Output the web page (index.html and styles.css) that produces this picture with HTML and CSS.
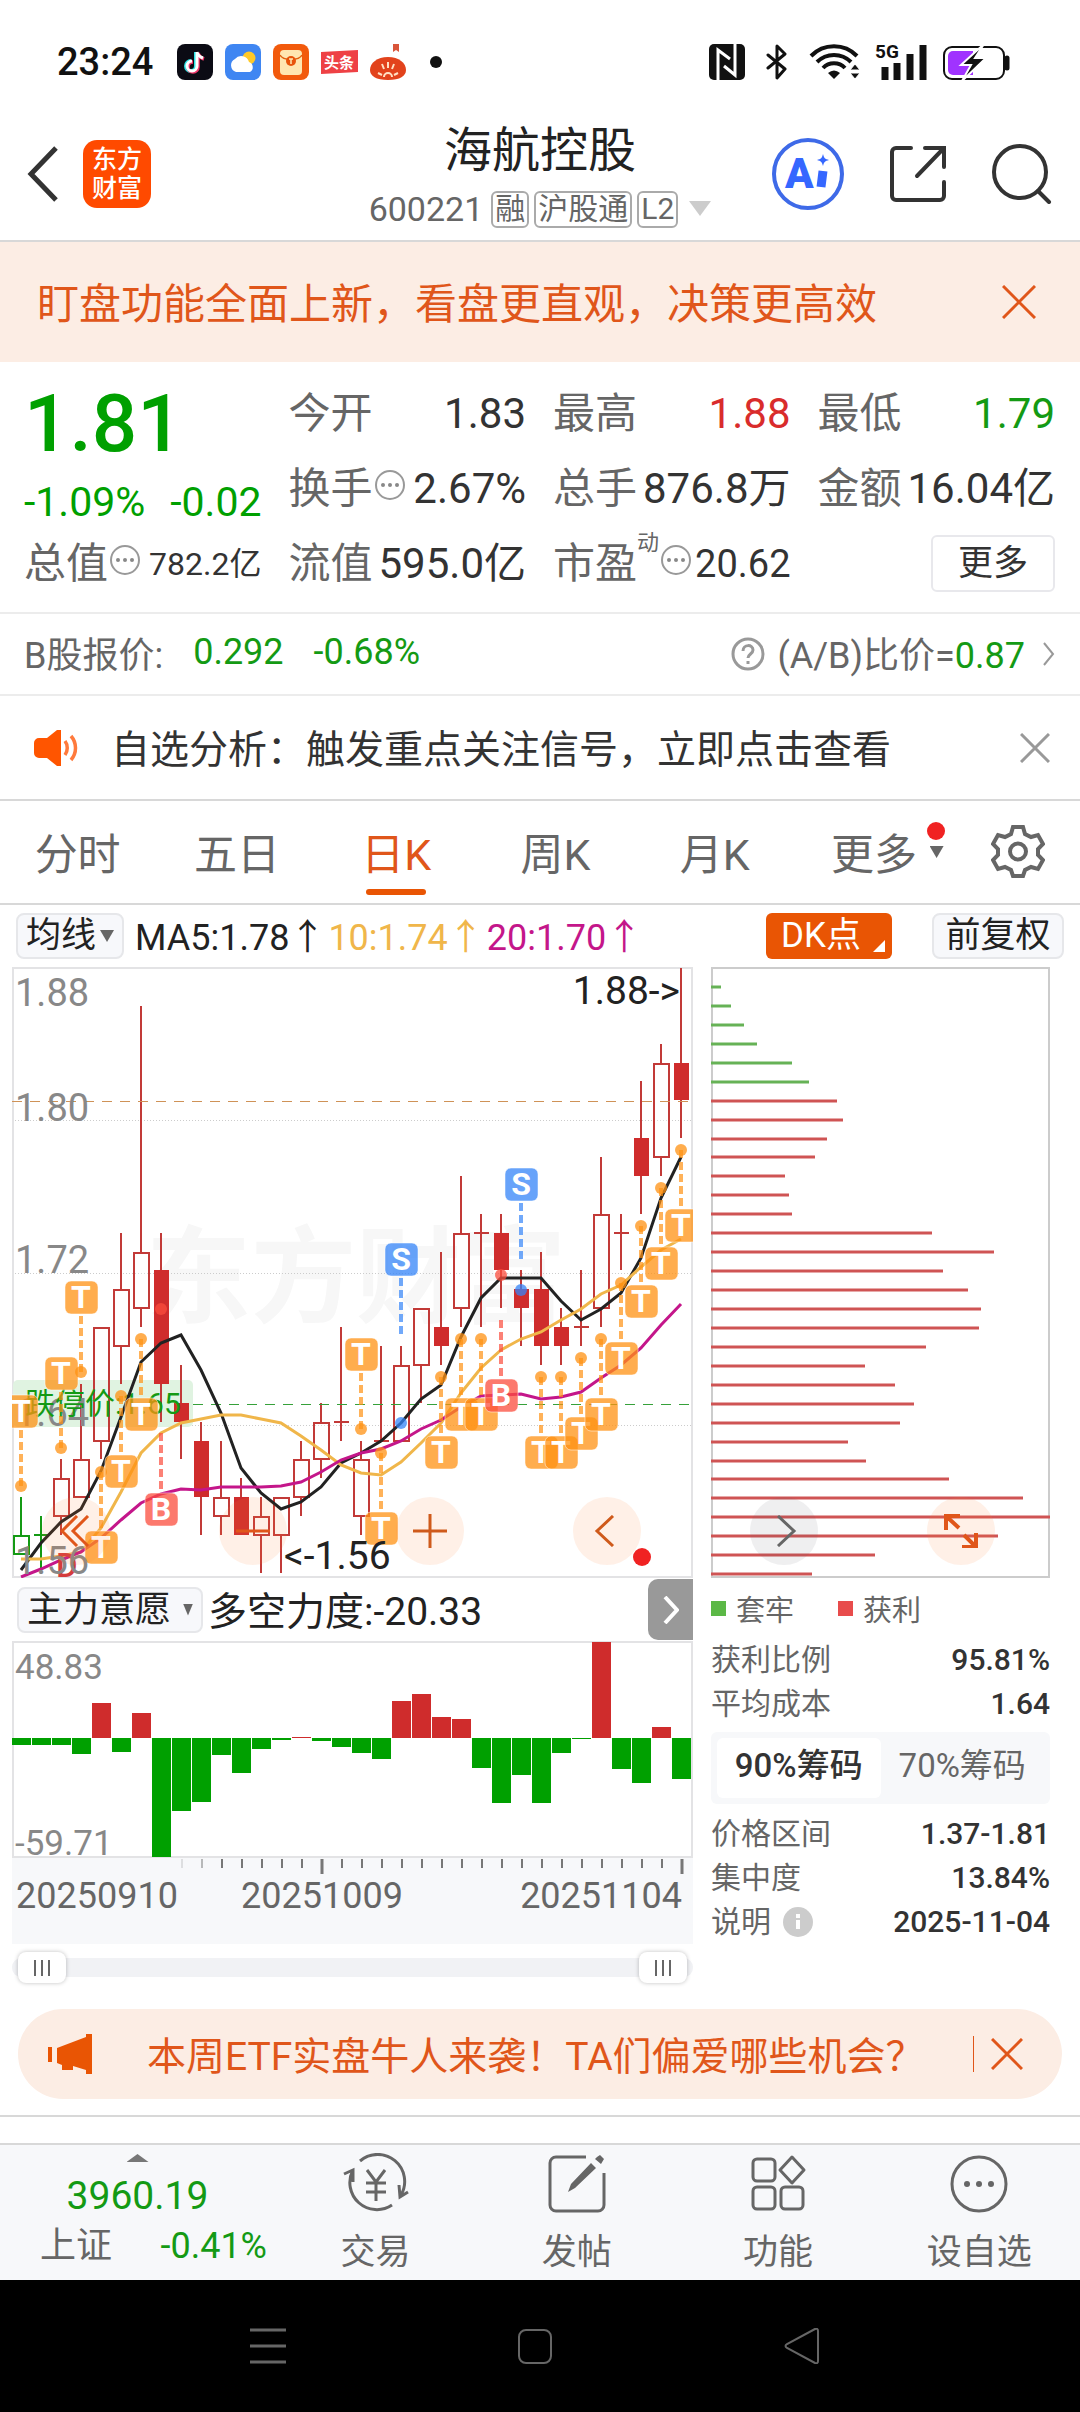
FILE: index.html
```html
<!DOCTYPE html>
<html lang="zh-CN">
<head>
<meta charset="utf-8">
<meta name="viewport" content="width=device-width, initial-scale=1">
<title>海航控股 600221</title>
<link rel="stylesheet" href="styles.css">
</head>
<body>
<div class="status">
  <div class="status-group">
    <span class="clock">23:24</span>
    <svg width="36" height="36" viewBox="0 0 36 36"><rect width="36" height="36" rx="8" fill="#0b0b14"/><path d="M19 8v14a5 5 0 1 1-5-5" fill="none" stroke="#2de2e6" stroke-width="4"/><path d="M21 9v14a5 5 0 1 1-5-5M21 9c1 4 3 5 6 6" fill="none" stroke="#f0386b" stroke-width="3.500"/><path d="M20 8v14a5 5 0 1 1-5-5M20 8c1 4 3 5 6 6" fill="none" stroke="#fff" stroke-width="3"/></svg>
    <svg width="36" height="36" viewBox="0 0 36 36"><rect width="36" height="36" rx="8" fill="#3f86f2"/><circle cx="24" cy="14" r="6.500" fill="#ffc928"/><path d="M11 28a7 7 0 0 1-1-13 8 8 0 0 1 14 3 5.500 5.500 0 0 1 1 10z" fill="#fff"/></svg>
    <svg width="36" height="36" viewBox="0 0 36 36"><rect width="36" height="36" rx="8" fill="#f25a0c"/><rect x="7" y="6" width="22" height="25" rx="4" fill="#ffe6b0"/><path d="M7 11c3 6 19 6 22 0" fill="none" stroke="#e0600f" stroke-width="1.500"/><circle cx="18" cy="17" r="5" fill="#e8540a"/><path d="M16 15h4M18 15v5" stroke="#ffe6b0" stroke-width="1.500"/></svg>
    <svg width="37" height="36" viewBox="0 0 37 36"><path d="M0 8l37-2v22L0 30z" fill="#ee4145"/><text x="18" y="24" text-anchor="middle" font-size="15" font-weight="700" fill="#fff">头条</text></svg>
    <svg width="36" height="36" viewBox="0 0 36 36"><path d="M23 0h6v8l-3-2-3 2z" fill="#d9553a"/><path d="M18 13C7 13 0 19 0 26c0 6 6 10 18 10s18-4 18-10c0-7-7-13-18-13z" fill="#e2431c"/><path d="M18 18v6M12 20l2 5M24 20l-2 5M8 29l4 2M28 29l-4 2M14 33a4 4 0 0 1 8 0" stroke="#ffe1c4" stroke-width="2" fill="none"/></svg>
    <span class="more-dot"></span>
  </div>
  <div class="status-group status-right">
    <svg width="36" height="36" viewBox="0 0 36 36"><rect width="36" height="36" rx="5" fill="#111"/><path d="M9 36V6l12 9M26 0v31L15 22" fill="none" stroke="#fff" stroke-width="3"/></svg>
    <svg class="bt" width="22" height="36" viewBox="0 0 22 36"><path d="M2 11l17 14-8 9V2l8 8L2 24" fill="none" stroke="#111" stroke-width="3" stroke-linejoin="round" stroke-linecap="round"/></svg>
    <svg width="51" height="36" viewBox="0 0 51 36"><path d="M2 12a32 32 0 0 1 46 0M8 18a24 24 0 0 1 34 0M14 24a15 15 0 0 1 22 0" fill="none" stroke="#111" stroke-width="4"/><path d="M25 35l-6-6q6-5 12 0z" fill="#111"/><path d="M46 20l5 6H41zM46 35l5-6H41z" fill="#111" stroke="#fff" stroke-width="1"/></svg>
    <svg width="52" height="38" viewBox="0 0 52 38"><text x="0" y="15" font-size="19" font-weight="700" fill="#111">5G</text><path d="M10 24v13M22 20v17M35 11v26M48 2v35" stroke="#111" stroke-width="7"/></svg>
    <svg width="68" height="38" viewBox="0 0 68 38"><rect x="2" y="4" width="60" height="32" rx="8" fill="none" stroke="#111" stroke-width="2"/><path d="M65 15v10" stroke="#111" stroke-width="5" stroke-linecap="round"/><path d="M11 8h20v24H11a5 5 0 0 1-5-5V13a5 5 0 0 1 5-5z" fill="#a033ff"/><path d="M42 1L19 22h10l-9 16 24-23H33z" fill="#111" stroke="#fff" stroke-width="2"/></svg>
  </div>
</div>

<header class="header">
  <div class="header-side">
    <button class="icon-btn" aria-label="返回"><svg width="32" height="56" viewBox="0 0 32 56"><path d="M29 2L4 28l25 26" fill="none" stroke="#333" stroke-width="5"/></svg></button>
    <a class="logo" href="#">东方<br>财富</a>
  </div>
  <div class="title">
    <h1>海航控股</h1>
    <div class="code">600221<span class="tag tag-first">融</span><span class="tag">沪股通</span><span class="tag">L2</span><svg class="code-arrow" width="22" height="16" viewBox="0 0 22 16"><path d="M0 0h22L11 15z" fill="#ccc"/></svg></div>
  </div>
  <div class="header-side header-right">
    <button class="icon-btn" aria-label="AI"><svg width="72" height="72" viewBox="0 0 72 72"><circle cx="36" cy="36" r="34" fill="#fff" stroke="#3e6ae8" stroke-width="4"/><text x="13" y="50" font-size="42" font-weight="900" fill="#3567ff">A</text><path d="M51 33l-2 16" stroke="#3567ff" stroke-width="9"/><path d="M51 16c1 4 2 5 6 6-4 1-5 2-6 6-1-4-2-5-6-6 4-1 5-2 6-6z" fill="#3567ff"/></svg></button>
    <button class="icon-btn" aria-label="分享"><svg width="58" height="58" viewBox="0 0 58 58"><path d="M22 3H7a4 4 0 0 0-4 4v44a4 4 0 0 0 4 4h44a4 4 0 0 0 4-4V37M36 3h19v19M54 4L28 31" fill="none" stroke="#333" stroke-width="4" stroke-linecap="round"/></svg></button>
    <button class="icon-btn" aria-label="搜索"><svg width="60" height="60" viewBox="0 0 60 60"><circle cx="28" cy="28" r="26" fill="none" stroke="#333" stroke-width="4"/><path d="M46 47l11 11" stroke="#333" stroke-width="4" stroke-linecap="round"/></svg></button>
  </div>
</header>

<div class="banner">
  <a href="#">盯盘功能全面上新，看盘更直观，决策更高效</a>
  <button class="icon-btn" aria-label="关闭"><svg width="34" height="34" viewBox="0 0 34 34"><path d="M1 1l32 32M33 1L1 33" stroke="#e0561a" stroke-width="3"/></svg></button>
</div>

<section class="quote">
  <div class="price-block">
    <div class="price">1.81</div>
    <div class="change"><span>-1.09%</span><span>-0.02</span></div>
  </div>
  <div class="stat"><span>今开</span><b>1.83</b></div>
  <div class="stat"><span>最高</span><b class="up">1.88</b></div>
  <div class="stat"><span>最低</span><b class="down">1.79</b></div>
  <div class="stat"><span>换手</span><svg class="dots"><use href="#dots"/></svg><b>2.67%</b></div>
  <div class="stat"><span>总手</span><b>876.8万</b></div>
  <div class="stat"><span>金额</span><b>16.04亿</b></div>
  <div class="stat"><span>总值</span><svg class="dots"><use href="#dots"/></svg><b class="small">782.2亿</b></div>
  <div class="stat"><span>流值</span><b>595.0亿</b></div>
  <div class="stat"><span>市盈</span><sup>动</sup><svg class="dots"><use href="#dots"/></svg><b class="medium">20.62</b></div>
  <div class="stat"><button class="more">更多</button></div>
</section>
<svg class="defs"><symbol id="dots" viewBox="0 0 30 30"><circle cx="15" cy="15" r="14" fill="none" stroke="#999" stroke-width="2"/><circle cx="8" cy="15" r="2" fill="#888"/><circle cx="15" cy="15" r="2" fill="#888"/><circle cx="22" cy="15" r="2" fill="#888"/></symbol></svg>

<div class="bshare">
  <span>B股报价:</span><span class="down">0.292</span><span class="down">-0.68%</span>
  <a href="#"><svg width="34" height="34" viewBox="0 0 34 34"><circle cx="17" cy="17" r="15" fill="none" stroke="#999" stroke-width="3"/><path d="M12 14c0-7 10-7 10-1 0 4-5 4-5 8M17 24v3" fill="none" stroke="#999" stroke-width="3"/></svg><span>(A/B)比价=<span class="down">0.87</span></span><svg class="chev" width="12" height="24" viewBox="0 0 12 24"><path d="M1 1l9 11-9 11" fill="none" stroke="#999" stroke-width="2"/></svg></a>
</div>

<div class="notice">
  <svg width="46" height="38" viewBox="0 0 46 38"><path d="M6 9h8L24 1h4v36h-4l-10-8H6a5 5 0 0 1-5-5V14a5 5 0 0 1 5-5z" fill="#ff5500"/><path d="M32 12c3 4 3 10 0 14M38 7c6 7 6 17 0 24" fill="none" stroke="#ff7a3c" stroke-width="3.500"/></svg>
  <a href="#">自选分析：触发重点关注信号，立即点击查看</a>
  <button class="icon-btn" aria-label="关闭"><svg width="30" height="30" viewBox="0 0 30 30"><path d="M1 1l28 28M29 1L1 29" stroke="#999" stroke-width="3"/></svg></button>
</div>

<nav class="tabs">
  <button>分时</button><button>五日</button><button class="on">日K</button><button>周K</button><button>月K</button><button class="tab-more">更多<i class="badge"></i><i class="tri"></i></button>
  <button class="gear" aria-label="设置"><svg width="54" height="54" viewBox="0 0 54 54"><path d="M22 3h10l2 7 6 3 7-2 5 9-5 5v6l5 5-5 9-7-2-6 3-2 6H22l-2-6-6-3-7 2-5-9 5-5v-6l-5-5 5-9 7 2 6-3z" fill="none" stroke="#666" stroke-width="4"/><circle cx="27" cy="27.500" r="8" fill="none" stroke="#666" stroke-width="4"/></svg></button>
</nav>

<div class="ma-bar">
  <button class="chip">均线<i class="tri"></i></button>
  <span class="ma5">MA5:1.78↑</span><span class="ma10">10:1.74↑</span><span class="ma20">20:1.70↑</span>
  <button class="dk">DK点</button>
  <button class="chip adjust">前复权</button>
</div>

<section class="charts">
  <svg class="chart" viewBox="12 967 681 611" role="img" aria-label="日K线">
    <text class="watermark" x="146" y="1314">东方财富</text>
    <path d="M12 1120H693M12 1273H693M12 1425H693" stroke="#ccc" stroke-width="1" stroke-dasharray="1 2" shape-rendering="crispEdges"/>
    <path d="M13 1577V968H692V1577z" fill="none" stroke="#e3e3e5" stroke-width="2"/>
    <rect x="13" y="1380" width="180" height="47" rx="5" fill="#e0f3e1"/>
    <g id="candles"></g>
    <path d="M12 1101H693" stroke="#cf9257" stroke-width="1" stroke-dasharray="10 8" shape-rendering="crispEdges"/>
    <path d="M193 1404H693" stroke="#36a13a" stroke-width="1" stroke-dasharray="10 8" shape-rendering="crispEdges"/>
    <g font-size="38" fill="#888"><text x="15" y="1006">1.88</text><text x="15" y="1121">1.80</text><text x="15" y="1273">1.72</text><text x="15" y="1426">1.64</text></g>
    <text x="25" y="1414" font-size="30" fill="#149a14">跌停价:1.65</text>
    <g id="averages"></g>
    <text x="56" y="1577" font-size="33" font-weight="500" fill="#d43c3c">D</text>
    <g id="marks"></g>
    <text x="15" y="1574" font-size="38" fill="#888">1.56</text>
    <g font-size="39" fill="#222"><text x="680" y="1004" text-anchor="end">1.88-&gt;</text><text x="284" y="1569">&lt;-1.56</text></g>
  </svg>
  <svg class="chart" viewBox="711 967 339 611" role="img" aria-label="筹码分布">
    <path d="M712 968H1049V1577H712z" fill="none" stroke="#ccc" stroke-width="2"/>
    <g id="chips"></g>
  </svg>
  <div class="chart-tools">
    <button aria-label="最早"><svg width="32" height="32" viewBox="0 0 32 32"><path d="M17 1L2 16l15 15M28 1L13 16l15 15" fill="none" stroke="#e0561a" stroke-width="3"/></svg></button>
    <button aria-label="缩小"><svg width="34" height="34" viewBox="0 0 34 34"><path d="M0 17h34" stroke="#e0561a" stroke-width="3"/></svg></button>
    <button aria-label="放大"><svg width="34" height="34" viewBox="0 0 34 34"><path d="M0 17h34M17 0v34" stroke="#cf5a1b" stroke-width="3"/></svg></button>
    <button aria-label="向左"><svg width="32" height="32" viewBox="0 0 32 32"><path d="M22 1L6 16l16 15" fill="none" stroke="#cf5a1b" stroke-width="3"/></svg><i class="badge"></i></button>
    <button class="gray" aria-label="向右"><svg width="32" height="32" viewBox="0 0 32 32"><path d="M10 1l16 15-16 15" fill="none" stroke="#666" stroke-width="3"/></svg></button>
    <button aria-label="全屏"><svg width="34" height="34" viewBox="0 0 34 34"><path d="M2 16V2h14M2 2l13 12M32 19v14H18M32 33L20 21" fill="none" stroke="#e0561a" stroke-width="4"/></svg></button>
  </div>
</section>

<section class="details">
  <div>
    <div class="force-bar">
      <button class="chip">主力意愿<i class="tri"></i></button>
      <span>多空力度:-20.33</span>
      <button class="expand" aria-label="展开"><svg width="16" height="28" viewBox="0 0 16 28"><path d="M2 1l12 13L2 27" fill="none" stroke="#fff" stroke-width="4"/></svg></button>
    </div>
    <svg class="chart" viewBox="12 1641 681 217" role="img" aria-label="多空力度">
      <path d="M13 1642H692V1857H13z" fill="none" stroke="#e3e3e5" stroke-width="2"/>
      <g id="force"></g>
      <g font-size="35" fill="#888"><text x="15" y="1679">48.83</text><text x="15" y="1855">-59.71</text></g>
    </svg>
    <div class="axis">
      <svg class="chart" viewBox="12 1858 681 18"><g id="ticks"></g></svg>
      <div class="dates"><span>20250910</span><span>20251009</span><span>20251104</span></div>
    </div>
    <div class="range">
      <input type="range" min="0" max="100" value="0" aria-label="起始日期">
      <input type="range" min="0" max="100" value="100" aria-label="结束日期">
    </div>
  </div>
  <div class="holding">
    <div class="legend"><i class="sq sq-green"></i><span>套牢</span><i class="sq"></i><span>获利</span></div>
    <div class="row"><span>获利比例</span><b>95.81%</b></div>
    <div class="row"><span>平均成本</span><b>1.64</b></div>
    <div class="segment"><button class="on">90%筹码</button><button>70%筹码</button></div>
    <div class="row"><span>价格区间</span><b>1.37-1.81</b></div>
    <div class="row"><span>集中度</span><b>13.84%</b></div>
    <div class="row"><span>说明</span><svg width="30" height="30" viewBox="0 0 30 30"><circle cx="15" cy="15" r="15" fill="#ccc"/><path d="M15 13v9M15 7v4" stroke="#fff" stroke-width="4"/></svg><b>2025-11-04</b></div>
  </div>
</section>

<div class="promo">
  <svg width="46" height="40" viewBox="0 0 46 40"><path d="M2 13v15" stroke="#e95504" stroke-width="4"/><path d="M9 14L38 3V0h6v40h-6v-4l-13-4v4H14v-5l-5-2z" fill="#e95504"/></svg>
  <a href="#">本周ETF实盘牛人来袭！TA们偏爱哪些机会？</a>
  <button class="icon-btn" aria-label="关闭"><svg width="32" height="32" viewBox="0 0 32 32"><path d="M1 1l30 30M31 1L1 31" stroke="#e0561a" stroke-width="3"/></svg></button>
</div>
<div class="gap"></div>

<nav class="bottom">
  <a class="index" href="#">
    <i class="up-tri"></i>
    <span class="index-value">3960.19</span>
    <span class="index-row"><span>上证</span><span class="down">-0.41%</span></span>
  </a>
  <a href="#"><svg width="66" height="60" viewBox="0 0 66 60"><g fill="none" stroke="#666" stroke-width="3"><path d="M17 8a27 27 0 0 1 41 34M49 52A27 27 0 0 1 10 17M1 21l9-4v12M65 39l-8 5-1-12M24 17l9 12 9-12M23 30h20M23 39h20M33 29v19"/></g></svg>交易</a>
  <a href="#"><svg width="66" height="60" viewBox="0 0 66 60"><path d="M42 4H12a6 6 0 0 0-6 6v42a6 6 0 0 0 6 6h42a6 6 0 0 0 6-6V20" fill="none" stroke="#666" stroke-width="3"/><path d="M47 10l5 5-21 20-7 4 3-8zM53 4l3-2 4 4-3 5-6-5z" fill="#666"/></svg>发帖</a>
  <a href="#"><svg width="66" height="60" viewBox="0 0 66 60"><g fill="none" stroke="#666" stroke-width="3"><rect x="8" y="6" width="22" height="22" rx="4"/><rect x="8" y="34" width="22" height="22" rx="4"/><rect x="36" y="34" width="22" height="22" rx="4"/><path d="M47 4l12 13-12 13-12-13z" stroke-linejoin="round"/></g></svg>功能</a>
  <a href="#"><svg width="66" height="60" viewBox="0 0 66 60"><circle cx="33" cy="31" r="27" fill="none" stroke="#666" stroke-width="3"/><circle cx="21" cy="31" r="3" fill="#666"/><circle cx="33" cy="31" r="3" fill="#666"/><circle cx="45" cy="31" r="3" fill="#666"/></svg>设自选</a>
</nav>

<nav class="system">
  <button aria-label="最近任务"><svg width="36" height="36" viewBox="0 0 36 36"><path d="M0 2h36M0 18h36M0 34h36" stroke="#666" stroke-width="3"/></svg></button>
  <button aria-label="主屏幕"><svg width="36" height="36" viewBox="0 0 36 36"><rect x="2" y="2" width="32" height="33" rx="7" fill="none" stroke="#666" stroke-width="2"/></svg></button>
  <button aria-label="返回"><svg width="36" height="36" viewBox="0 0 36 36"><path d="M31 1L3 16q-3 2 0 4l28 15q3 1 3-2V3q0-3-3-2z" fill="none" stroke="#666" stroke-width="2"/></svg></button>
</nav>
<script src="chart.js"></script>
</body>
</html>
```
FILE: styles.css
```css
* { box-sizing: border-box; }
body { margin: 0; background: #fff; color: #333; font-family: Roboto, "Noto Sans CJK SC", sans-serif; }
button { margin: 0; padding: 0; border: 0; background: none; color: inherit; font: inherit; }
a { color: inherit; text-decoration: none; }
b { font-weight: 400; }
i { font-style: normal; }
svg { display: block; flex: none; }
.icon-btn { display: flex; flex: none; }
.defs { width: 0; height: 0; position: absolute; }
.up { color: #d92c2c; }
.down { color: #149a14; }
.chart { width: 100%; height: auto; }
.tri { width: 14px; height: 12px; background: #666; clip-path: polygon(0 0, 100% 0, 50% 100%); }
.badge { position: absolute; width: 18px; height: 18px; border-radius: 50%; background: #f02222; }

.status { display: flex; justify-content: space-between; align-items: center; height: 120px; padding: 4px 70px 0 57px; }
.status-group { display: flex; align-items: center; gap: 12px; }
.status-right { gap: 15px; }
.bt { margin: 0 6px; }
.clock { font-size: 38px; font-weight: 500; color: #111; margin-right: 12px; }
.more-dot { width: 12px; height: 12px; border-radius: 50%; background: #111; margin-left: 12px; }

.header { display: grid; grid-template-columns: 1fr auto 1fr; height: 122px; border-bottom: 2px solid #d8d8d8; }
.header-side { display: flex; align-items: center; gap: 24px; height: 108px; padding-left: 27px; }
.header-right { justify-content: flex-end; gap: 45px; padding: 0 28px 0 0; }
.logo { width: 68px; height: 68px; padding-top: 5px; border-radius: 14px; background: #ff4a00; color: #fff; font-size: 25px; line-height: 29px; font-weight: 500; text-align: center; }
.title { text-align: center; }
h1 { margin: 0; font-size: 48px; line-height: 62px; font-weight: 400; color: #222; }
.code { display: flex; align-items: center; font-size: 34px; line-height: 54px; color: #666; }
.tag { height: 37px; padding: 0 2px; margin-left: 5px; border: 2px solid #aaa; border-radius: 6px; font-size: 30px; line-height: 32px; }
.tag-first { margin-left: 8px; }
.code-arrow { margin-left: 11px; }

.banner { display: flex; align-items: center; justify-content: space-between; height: 120px; padding: 0 44px 0 37px; background: #fcede4; color: #e0561a; font-size: 42px; }
.banner a, .notice a, .bshare > span, .bshare a > span, .ma-bar > span, .force-bar > span { padding-bottom: 4px; }

.quote { display: grid; grid-template-columns: repeat(4, minmax(0, 1fr)); grid-auto-rows: 75px; column-gap: 27px; padding: 14px 25px 11px 24px; border-bottom: 2px solid #ececec; font-size: 42px; }
.price-block { grid-row: span 2; color: #00a000; }
.price { font-size: 80px; line-height: 96px; font-weight: 500; }
.change { display: flex; justify-content: space-between; font-size: 41px; line-height: 60px; }
.stat { display: flex; align-items: center; white-space: nowrap; line-height: 60px; }
.stat span, .stat sup { color: #666; }
.stat b { margin-left: auto; }
.stat .small { font-size: 32px; }
.stat .medium { font-size: 38px; }
.stat sup { font-size: 22px; line-height: 22px; align-self: flex-start; margin: 6px 0 0; }
.dots { width: 30px; height: 30px; margin-left: 2px; margin-bottom: 8px; }
.more { width: 124px; height: 57px; margin-left: auto; border: 2px solid #e8e8ec; border-radius: 6px; font-size: 35px; line-height: 48px; }

.bshare { display: flex; align-items: center; gap: 30px; height: 82px; padding: 0 25px 0 24px; border-bottom: 2px solid #ececec; font-size: 36px; color: #666; }
.bshare a { display: flex; align-items: center; gap: 12px; margin-left: auto; }
.chev { margin-left: 6px; }

.notice { display: flex; align-items: center; height: 105px; padding: 0 30px 0 33px; border-bottom: 2px solid #d8d8d8; font-size: 39px; }
.notice a { flex: 1; margin-left: 32px; }

.tabs { display: flex; height: 104px; border-bottom: 2px solid #d8d8d8; font-size: 43px; color: #666; }
.tabs button { position: relative; flex: 4; padding: 0 4px 2px 0; }
.tabs .tab-more { padding-right: 8px; }
.tabs .gear { flex: 3; display: flex; align-items: center; justify-content: center; }
.tabs .on { color: #e0561a; }
.tabs .on::after { content: ""; position: absolute; left: 50%; bottom: 8px; width: 60px; height: 6px; margin-left: -32px; border-radius: 3px; background: #e95504; }
.tabs .badge { right: 15px; top: 21px; }
.tabs .tri { position: absolute; right: 16px; top: 45px; }

.ma-bar { display: flex; align-items: center; height: 62px; padding: 0 16px; font-size: 36px; color: #222; white-space: nowrap; }
.chip { display: flex; align-items: center; justify-content: center; gap: 4px; height: 46px; border: 2px solid #e6e7ea; border-radius: 8px; background: #f7f8fb; color: #222; font-size: 35px; line-height: 40px; padding: 0 8px; }
.ma5 { margin-left: 11px; }
.ma10 { margin-left: 3px; color: #f0b64a; }
.ma20 { margin-left: 3px; color: #c4168a; }
.dk { position: relative; width: 126px; height: 46px; margin-left: auto; padding-right: 16px; border-radius: 6px; background: #e95504; color: #fff; font-size: 35px; line-height: 40px; }
.dk::after { content: ""; position: absolute; right: 7px; bottom: 7px; width: 12px; height: 12px; background: #fff; clip-path: polygon(100% 0, 100% 100%, 0 100%); }
.adjust { width: 132px; margin-left: 40px; }

.charts { position: relative; display: grid; grid-template-columns: 681fr 339fr; column-gap: 18px; padding: 0 30px 0 12px; }
.watermark { font-size: 105px; font-weight: 700; fill: #f7f7f7; }
.chart-tools { position: absolute; left: 42px; right: 85px; bottom: 13px; display: flex; justify-content: space-between; }
.chart-tools button { position: relative; display: flex; align-items: center; justify-content: center; width: 68px; height: 68px; border-radius: 50%; background: rgba(255, 130, 60, .12); }
.chart-tools .gray { background: rgba(100, 100, 110, .1); }
.chart-tools .badge { right: -10px; bottom: -1px; }

.details { display: grid; grid-template-columns: 681fr 339fr; column-gap: 18px; padding: 0 30px 0 12px; }
.force-bar { display: flex; align-items: center; height: 63px; padding-left: 5px; font-size: 39px; color: #222; white-space: nowrap; }
.force-bar .chip { width: 186px; gap: 12px; margin-right: 5px; font-size: 36px; }
.expand { display: flex; align-items: center; justify-content: center; width: 45px; height: 61px; margin-left: auto; border-radius: 10px 0 0 10px; background: #999; }
.axis { height: 86px; background: #f7f8fa; }
.dates { display: flex; justify-content: space-between; padding: 0 11px 0 4px; font-size: 36px; line-height: 40px; color: #666; }
.dates span:nth-child(2) { margin-right: 54px; }
.range { position: relative; display: grid; height: 19px; margin: 14px 0 32px; padding: 0 6px; border-radius: 9px; background: #f1f2f5; }
.range input { grid-area: 1 / 1; appearance: none; width: 100%; height: 19px; margin: 0; background: none; pointer-events: none; }
.range input::-webkit-slider-thumb { appearance: none; width: 48px; height: 31px; border-radius: 8px; pointer-events: auto; background: linear-gradient(90deg, #666 2px, transparent 2px 7px, #666 7px 9px, transparent 9px 14px, #666 14px) center / 16px 16px no-repeat #fff; box-shadow: 0 0 4px rgba(0, 0, 0, .25); }

.holding { font-size: 30px; color: #666; }
.legend { display: flex; align-items: center; height: 60px; font-size: 29px; }
.sq { width: 15px; height: 15px; margin-right: 10px; background: #e84c4c; }
.sq-green { background: #5bb846; }
.sq-green + span { margin-right: 44px; }
.row { display: flex; align-items: center; height: 44px; line-height: 44px; }
.row svg { margin-left: 12px; }
.row b { margin-left: auto; color: #333; font-weight: 500; }
.segment { display: grid; grid-template-columns: 1fr 1fr; height: 72px; margin: 6px 0 8px; padding: 6px; border-radius: 6px; background: #f7f8fa; font-size: 33px; line-height: 54px; white-space: nowrap; }
.segment button { padding-bottom: 4px; }
.segment .on { border-radius: 6px; background: #fff; color: #333; font-weight: 500; }

.promo { display: flex; align-items: center; height: 90px; margin: 0 18px 16px; padding: 0 39px 0 30px; border-radius: 45px; background: #fcede4; color: #e0561a; font-size: 39px; }
.promo a { flex: 1; margin-left: 53px; padding-bottom: 2px; white-space: nowrap; }
.promo .icon-btn { padding: 2px 0 2px 17px; border-left: 1px solid #e0561a; }
.gap { height: 30px; border-top: 2px solid #d8d8d8; border-bottom: 2px solid #d8d8d8; }

.bottom { display: flex; height: 135px; background: #f7f8fa; color: #666; font-size: 35px; }
.bottom a { flex: 1; display: flex; flex-direction: column; align-items: center; padding-top: 8px; line-height: 80px; }
.bottom .index { flex: none; width: 275px; line-height: 48px; }
.up-tri { width: 22px; height: 8px; margin-top: 1px; background: #777; clip-path: polygon(50% 0, 100% 100%, 0 100%); }
.index .index-value { margin-top: 10px; color: #149a14; font-size: 39px; }
.index-row { display: flex; justify-content: space-between; width: 100%; padding: 2px 8px 0 40px; font-size: 36px; }

.system { display: grid; grid-template-columns: repeat(3, 1fr); height: 132px; padding: 0 144px 0 134px; background: #000; }
.system button { display: flex; align-items: center; justify-content: center; }
```
FILE: chart.js
```js
// Candle: [high, body top, body bottom, low, kind] in cents; kind: h hollow, f filled, g green
const candles = [
  [160,158,157,157,'g'],[159,158,158,156,'g'],[162,161,159,158,'h'],[166,162,160,160,'h'],[169,169,163,162,'h'],
  [174,171,168,166,'h'],[186,173,170,169,'h'],[174,172,166,164,'f'],[167,165,164,162,'f'],[164,163,160,158,'f'],
  [163,160,159,158,'h'],[161,160,158,158,'f'],[160,159,158,156,'h'],[160,160,158,156,'h'],[163,162,160,159,'h'],
  [165,164,162,161,'h'],[169,164,164,163,'h'],[163,162,159,158,'h'],[168,163,163,163,'h'],[168,167,163,163,'h'],
  [170,170,167,165,'h'],[173,169,168,167,'f'],[177,174,170,169,'h'],[175,174,174,169,'h'],[175,174,172,170,'f'],
  [172,171,170,168,'f'],[173,171,168,167,'f'],[170,169,168,167,'f'],[172,169,169,168,'h'],[178,175,170,169,'h'],
  [175,174,174,172,'h'],[182,179,177,175,'f'],[184,183,178,177,'h'],[188,183,181,179,'f']
];
const x = i => 21 + 20 * i;
const y = cents => Math.round(968 + (188 - cents) * 18.9);
const put = (id, markup) => { document.getElementById(id).innerHTML = markup; };

put('candles', candles.map(([hi, top, bottom, lo, kind], i) => {
  const color = kind === 'g' ? '#149a14' : '#c23a38';
  let s = `<path d="M${x(i)} ${y(hi)}V${y(top)}M${x(i)} ${y(bottom)}V${y(lo)}" stroke="${color}" stroke-width="2"/>`;
  if (top === bottom) s += `<path d="M${x(i) - 7} ${y(top)}h15" stroke="${color}" stroke-width="2"/>`;
  else if (kind === 'f') s += `<rect x="${x(i) - 7}" y="${y(top)}" width="15" height="${y(bottom) - y(top)}" fill="#cf2c2c"/>`;
  else s += `<rect x="${x(i) - 7}" y="${y(top) + 1}" width="15" height="${y(bottom) - y(top) - 1}" fill="#fff" fill-opacity="${kind === 'g' ? 0 : .3}" stroke="${color}" stroke-width="2"/>`;
  return s;
}).join(''));

const averages = {
  '#222': [1570,1543,1522,1509,1471,1417,1362,1343,1335,1370,1413,1468,1493,1509,1502,1487,1463,1453,1441,1423,1399,1385,1337,1298,1278,1278,1278,1301,1320,1309,1293,1258,1198,1157],
  '#f0b64a': [1559,1559,1556,1552,1528,1492,1453,1433,1423,1419,1415,1415,1419,1423,1436,1450,1465,1473,1475,1462,1443,1423,1393,1368,1350,1339,1332,1320,1309,1294,1285,1267,1250,1239],
  '#c4168a': [1577,1569,1560,1552,1538,1520,1503,1494,1489,1490,1487,1487,1487,1486,1482,1472,1460,1453,1449,1441,1429,1420,1407,1396,1395,1394,1399,1397,1392,1378,1365,1348,1325,1304]
};
put('averages', Object.entries(averages).map(([color, ys]) =>
  `<polyline points="${ys.map((v, i) => x(i) + ',' + v).join(' ')}" fill="none" stroke="${color}" stroke-width="3"/>`).join(''));

// Mark: [letter, candle, box centre, dot centre, dash start, dash end]
const marks = [
  [0,1411,1486],[2,1373,1448],[3,1297,1372],[4,1547,1472],[5,1471,1396],[6,1414,1339],[17,1354,1429],[18,1528,1453],
  [21,1452,1377],[22,1414,1339],[23,1414,1339],[26,1452,1377],[27,1452,1377],[28,1433,1358],[29,1414,1339],
  [30,1358,1283],[31,1301,1226],[32,1263,1188],[33,1225,1150]
].map(([i, box, dot]) => ['T', i, box, dot, dot, box > dot ? box - 19 : box + 19]).concat([
  ['B', 7, 1509, 1309, 1433, 1491], ['B', 24, 1395, 1275, 1320, 1377],
  ['S', 19, 1259, 1423, 1278, 1334], ['S', 25, 1184, 1290, 1203, 1259]
]);
const markColor = { T: '#ff9213', B: '#fb4c3c', S: '#3484f8' };
put('marks', marks.map(([letter, i, box, dot, from, to]) => {
  const c = markColor[letter];
  return `<path d="M${x(i)} ${from}V${to}" stroke="${c}" stroke-opacity=".7" stroke-width="4" stroke-dasharray="8 4"/>` +
    `<circle cx="${x(i)}" cy="${dot}" r="6" fill="${c}" fill-opacity=".75"/>` +
    `<rect x="${x(i) - 16}" y="${box - 16}" width="33" height="33" rx="6" fill="${c}" fill-opacity=".75" stroke="#fff" stroke-opacity=".5"/>` +
    `<text x="${x(i)}" y="${box + 11}" text-anchor="middle" font-size="32" font-weight="700" fill="#fff">${letter}</text>`;
}).join(''));

const chips = [10,20,33,46,81,98,126,132,116,104,74,78,81,221,283,232,257,270,268,215,154,184,203,189,137,155,238,312,339,287,164,101];
put('chips', chips.map((w, i) =>
  `<path d="M711 ${Math.round(987 + 18.94 * i)}h${w}" stroke="${i < 6 ? '#66b256' : '#cf5454'}" stroke-width="3"/>`).join(''));

const force = [-7,-7,-7,-16,35,-14,25,-119,-73,-64,-17,-35,-11,-2,1,-3,-9,-15,-21,37,44,21,19,-30,-65,-37,-65,-15,-1,96,-31,-45,11,-41];
put('force', force.map((v, i) =>
  `<rect x="${12 + 20 * i}" y="${v > 0 ? 1738 - v : 1738}" width="19" height="${Math.abs(v)}" fill="${v > 0 ? '#cf2c2c' : '#00a000'}"/>`).join(''));

put('ticks', force.map((v, i) => {
  if (i < 8) return '';
  const major = i === 15 || i === 33;
  return `<path d="M${22 + 20 * i} 1859v${major ? 15 : 9}" stroke="#777" stroke-opacity="${i === 8 ? .2 : i === 9 ? .5 : 1}" stroke-width="${major ? 3 : 2}"/>`;
}).join(''));
```
